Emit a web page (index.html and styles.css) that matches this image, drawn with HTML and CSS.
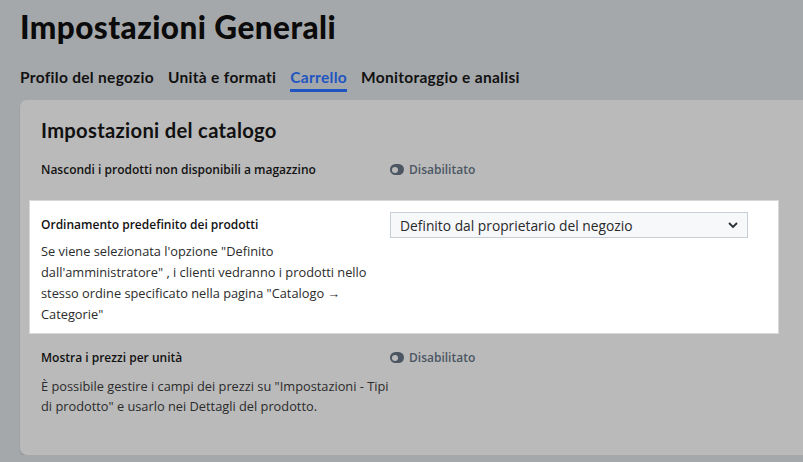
FILE: index.html
```html
<!DOCTYPE html>
<html lang="it">
<head>
    <meta charset="UTF-8">
    <title>Impostazioni Generali</title>
    <link rel="stylesheet" href="styles.css">
</head>
<body>
    <h1 class="page-title">Impostazioni Generali</h1>
    <div class="tabs">
        <a class="tab">Profilo del negozio</a>
        <a class="tab">Unità e formati</a>
        <a class="tab active">Carrello</a>
        <a class="tab">Monitoraggio e analisi</a>
    </div>

    <div class="card">
        <h2>Impostazioni del catalogo</h2>

        <div class="setting first">
            <div class="setting-info">
                <div class="setting-label">Nascondi i prodotti non disponibili a magazzino</div>
            </div>
            <div class="setting-control">
                <span class="toggle"><span class="knob"></span></span>
                <span class="toggle-text">Disabilitato</span>
            </div>
        </div>

        <div class="setting highlight">
            <div class="setting-info">
                <div class="setting-label">Ordinamento predefinito dei prodotti</div>
                <p class="setting-desc">Se viene selezionata l'opzione "Definito dall'amministratore" , i clienti vedranno i prodotti nello stesso ordine specificato nella pagina "Catalogo → Categorie"</p>
            </div>
            <div class="setting-control">
                <div class="select">
                    <span>Definito dal proprietario del negozio</span>
                    <svg width="12" height="8" viewBox="0 0 12 8"><path d="M2 2l4 4 4-4" fill="none" stroke="#2a2f36" stroke-width="1.8"/></svg>
                </div>
            </div>
        </div>

        <div class="setting last">
            <div class="setting-info">
                <div class="setting-label">Mostra i prezzi per unità</div>
                <p class="setting-desc">È possibile gestire i campi dei prezzi su "Impostazioni - Tipi di prodotto" e usarlo nei Dettagli del prodotto.</p>
            </div>
            <div class="setting-control">
                <span class="toggle"><span class="knob"></span></span>
                <span class="toggle-text">Disabilitato</span>
            </div>
        </div>
    </div>
</body>
</html>
```

FILE: styles.css
```css
body {
    margin: 0;
    padding: 0 0 0 20px;
    background-color: #a5a8ab;
    color: #111;
    font-family: "Noto Sans", "Open Sans", sans-serif;
    overflow: hidden;
}
.page-title {
    font-family: "Lato", sans-serif;
    font-weight: 900;
    font-size: 31.5px;
    letter-spacing: 0.45px;
    margin: 0;
    padding-top: 9px;
    line-height: 36px;
    color: #0b0b0b;
}
.tabs {
    display: flex;
    gap: 14px;
    margin-top: 22px;
    height: 30px;
}
.tab {
    font-family: "Lato", sans-serif;
    font-weight: 700;
    font-size: 15.5px;
    letter-spacing: 0.3px;
    color: #111;
    line-height: 20px;
    height: 25px;
    box-sizing: border-box;
}
.tab.active {
    color: #1f55c0;
    border-bottom: 3px solid #1f55c0;
}
.card {
    background-color: #bababa;
    border-radius: 7px 0 0 7px;
    margin-top: 3px;
    height: 355px;
    box-shadow: 0 2px 2px rgba(0, 0, 0, 0.12);
    padding-top: 14px;
    box-sizing: border-box;
}
.card h2 {
    font-family: "Lato", sans-serif;
    font-weight: 700;
    font-size: 20.2px;
    letter-spacing: 0.3px;
    margin: 0 0 0 21px;
    line-height: 32px;
}
.setting {
    display: flex;
    padding: 0 21px;
}
.setting-info {
    width: 349px;
    flex: none;
}
.setting-label {
    font-family: "Open Sans", sans-serif;
    font-size: 12px;
    font-weight: 600;
    color: #121212;
    line-height: 18px;
}
.setting-desc {
    font-family: "Open Sans", sans-serif;
    font-size: 12.8px;
    color: #2b2b2b;
    line-height: 21px;
    margin: 7px 0 0;
}
.setting-control {
    display: flex;
    align-items: flex-start;
    gap: 5px;
}
.setting.first {
    margin-top: 15px;
    height: 40px;
}
.highlight {
    background: #fff;
    margin-left: 10px;
    margin-right: 25px;
    padding: 15px 0 8px 11px;
    box-shadow: 0 0 0 1px #d8d8d8;
}
.highlight .setting-control {
    margin-top: -4px;
}
.setting.last {
    margin-top: 16px;
}
.setting.last .setting-desc {
    line-height: 20px;
    margin-top: 9px;
}
.toggle {
    display: inline-flex;
    align-items: center;
    width: 14px;
    height: 11px;
    border-radius: 6px;
    background: #4b5662;
    margin-top: 3px;
    box-sizing: border-box;
    padding-left: 2px;
}
.knob {
    width: 6px;
    height: 6px;
    border-radius: 50%;
    background: #bababa;
}
.toggle-text {
    font-family: "Open Sans", sans-serif;
    font-size: 12px;
    font-weight: 600;
    color: #4b5662;
    line-height: 17px;
}
.select {
    display: flex;
    align-items: center;
    justify-content: space-between;
    width: 358px;
    height: 26px;
    box-sizing: border-box;
    border: 1px solid #c7ced6;
    background: #f7f8fa;
    padding: 0 8px 0 9px;
    font-family: "Open Sans", sans-serif;
    font-size: 13.8px;
    color: #2a2a2a;
}
```
